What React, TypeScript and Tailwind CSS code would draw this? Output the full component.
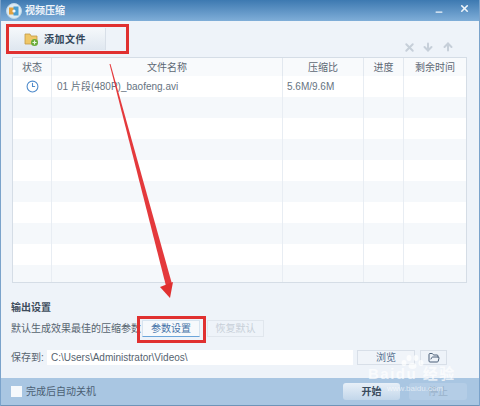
import { Minus, X, ArrowDown, ArrowUp, Clock3, FolderOpen } from 'lucide-react'

const rows = [0, 1, 2, 3, 4, 5, 6, 7, 8]

function FolderAdd() {
  return (
    <svg width="15" height="15" viewBox="0 0 15 15">
      <path d="M1 2h5l1 2h6v8H1z" fill="#efc768" stroke="#c39a45" strokeWidth="0.8" />
      <circle cx="10.5" cy="10.5" r="3.5" fill="#68ab38" />
      <path d="M10.5 8.5v4M8.5 10.5h4" stroke="#e9f5df" strokeWidth="1.2" />
    </svg>
  )
}

function AppLogo() {
  return (
    <svg width="16" height="16" viewBox="0 0 16 16">
      <circle cx="8" cy="8" r="7.5" fill="#dcebf4" stroke="#bcd6e6" />
      <path d="M3 4.5h5v7H3z" fill="#e2a23f" />
      <path d="M7.5 3.5h5v9h-5z" fill="#4a9ed0" />
      <circle cx="8" cy="8" r="1.6" fill="#f4f8fb" />
    </svg>
  )
}

function Paw() {
  return (
    <svg className="absolute left-[398px] top-[354px]" width="26" height="16" viewBox="0 0 26 16" fill="#ffffff" fillOpacity="0.7">
      <ellipse cx="5" cy="9" rx="2.5" ry="3" />
      <ellipse cx="10" cy="4" rx="2.5" ry="3" />
      <ellipse cx="17" cy="4" rx="2.5" ry="3" />
      <ellipse cx="22" cy="9" rx="2.5" ry="3" />
      <ellipse cx="13.5" cy="12" rx="4" ry="3" />
    </svg>
  )
}

export default function App() {
  return (
    <div className="w-[480px] h-[406px] flex flex-col overflow-hidden relative bg-[#eef3f9] border-x border-[#7ba3cb] font-['Liberation_Sans','Noto_Sans_CJK_SC',sans-serif] text-[10px] text-[#56636f]">
      {/* title bar */}
      <div className="h-[21px] shrink-0 flex items-center pl-[5px] bg-gradient-to-b from-[#3d79b1] to-[#7faed8]">
        <AppLogo />
        <span className="ml-[3px] text-[10px] font-bold text-[#eef4fa]">视频压缩</span>
        <div className="ml-auto flex items-center h-full text-[#eef4fa]">
          <div className="w-[27px] flex justify-center pt-[3px]">
            <Minus size={10} strokeWidth={3} />
          </div>
          <div className="w-[27px] pr-[3px] pb-[4px] flex justify-center">
            <X size={11} strokeWidth={3.5} />
          </div>
        </div>
      </div>

      {/* toolbar */}
      <div className="h-[36px] shrink-0 flex items-center pl-[9px] pr-[25px]">
        <div className="h-[22px] w-[96px] flex items-center pl-[14px] gap-[5px] border-r border-[#d8dfe8] bg-gradient-to-b from-[#f5f8fb] to-[#dfe7f0] font-bold text-[10px] tracking-[0.5px] text-[#33475a]">
          <FolderAdd />
          添加文件
        </div>
        <div className="ml-auto flex items-center gap-[6px] pt-[16px] text-[#c6cfd9]">
          <X size={13} strokeWidth={3.5} />
          <ArrowDown size={12} strokeWidth={4} />
          <ArrowUp size={12} strokeWidth={4} className="ml-[2px]" />
        </div>
      </div>

      {/* file table */}
      <div className="ml-[11px] w-[455px] h-[226px] shrink-0 bg-white border border-[#d5dde6] flex flex-col overflow-hidden">
        <div className="h-[18px] shrink-0 flex items-center text-center text-[#5d6874] bg-[#f8fafc]">
          <div className="w-[39px] h-full pt-[2px] border-r border-[#e2e8ef]">状态</div>
          <div className="w-[231px] h-full pt-[2px] border-r border-[#e2e8ef]">文件名称</div>
          <div className="w-[81px] h-full pt-[2px] border-r border-[#e2e8ef]">压缩比</div>
          <div className="w-[40px] h-full pt-[2px] border-r border-[#e2e8ef]">进度</div>
          <div className="flex-1 h-full pt-[2px]">剩余时间</div>
        </div>
        <div className="h-[21px] shrink-0 flex items-center text-[#66737f]">
          <div className="w-[39px] h-full flex items-center justify-center border-r border-[#e8edf3]">
            <Clock3 size={13} className="text-[#4f8bcb]" />
          </div>
          <div className="w-[231px] h-full flex items-center pl-[5px] border-r border-[#e8edf3]">01 片段(480P)_baofeng.avi</div>
          <div className="w-[81px] h-full flex items-center pl-[4px] border-r border-[#e8edf3]">5.6M/9.6M</div>
          <div className="w-[40px] h-full border-r border-[#e8edf3]" />
        </div>
        {rows.map((r) => (
          <div key={r} className={r % 2 === 0 ? 'h-[21px] shrink-0 flex bg-[#f5f8fb]' : 'h-[21px] shrink-0 flex bg-white'}>
            <div className="w-[39px] border-r border-[#e8edf3]" />
            <div className="w-[231px] border-r border-[#e8edf3]" />
            <div className="w-[81px] border-r border-[#e8edf3]" />
            <div className="w-[40px] border-r border-[#e8edf3]" />
          </div>
        ))}
      </div>

      {/* output settings */}
      <div className="mt-[17px] ml-[10px] font-bold text-[#3d4c5c]">输出设置</div>
      <div className="mt-[5px] ml-[10px] flex items-center">
        <span className="w-[131px] whitespace-nowrap">默认生成效果最佳的压缩参数</span>
        <div className="h-[17px] w-[58px] flex items-center justify-center bg-[#f6f9fc] border border-[#d7e4f0] border-b-[#6ba5da] text-[#4573a8]">参数设置</div>
        <div className="ml-[7px] h-[17px] w-[57px] flex items-center justify-center border border-[#e0e6ed] text-[#c7cfd8]">恢复默认</div>
      </div>
      <div className="mt-[13px] ml-[10px] flex items-center">
        <span className="w-[36px] whitespace-nowrap">保存到:</span>
        <div className="h-[15px] w-[306px] flex items-center pl-[4px] bg-white whitespace-nowrap">C:\Users\Administrator\Videos\</div>
        <div className="ml-[4px] h-[15px] w-[58px] flex items-center justify-center border border-[#d8dfe8] bg-[#f0f4f9] text-[#56708f]">浏览</div>
        <div className="ml-[5px] h-[15px] w-[27px] flex items-center justify-center border border-[#d8dfe8] text-[#4a5f78]">
          <FolderOpen size={12} />
        </div>
      </div>

      {/* bottom bar */}
      <div className="mt-auto h-[28px] shrink-0 flex items-center pl-[10px] pr-[12px] pb-[1px] bg-[#a9c6e2] border-b border-[#6f94b8]">
        <div className="w-[11px] h-[11px] bg-[#f6f9fc]" />
        <span className="ml-[4px] text-[#4b6074]">完成后自动关机</span>
        <div className="ml-auto h-[17px] w-[57px] flex items-center justify-center rounded-[3px] bg-gradient-to-b from-[#e8f0f8] to-[#c2d6ea] font-bold text-[#3a4c5e]">开始</div>
        <div className="ml-[9px] h-[17px] w-[58px] flex items-center justify-center rounded-[3px] bg-[#b4cde6] text-[#9ab2ca]">停止</div>
      </div>

      {/* red annotations over the screenshot */}
      <div className="absolute left-[5px] top-[24px] w-[123px] h-[30px] border-[3px] border-[#e03030]" />
      <div className="absolute left-[136px] top-[316px] w-[69px] h-[27px] border-[3px] border-[#e03030]" />
      <svg className="absolute left-[-1px] top-0" width="480" height="406" viewBox="0 0 480 406">
        <path d="M109.5 64L110.5 64L172 284L166 286z" fill="#e4393c" />
        <path d="M160 287L173 282L170 298z" fill="#e03030" />
      </svg>

      {/* photo site watermark */}
      <Paw />
      <div className="absolute left-[367px] top-[366px] text-[15px] leading-[15px] font-bold tracking-[1.5px] whitespace-nowrap text-white/70">Baidu 经验</div>
      <div className="absolute left-[386px] top-[385px] text-[8px] leading-[8px] whitespace-nowrap text-white/60">www.baidu.com</div>
    </div>
  )
}
